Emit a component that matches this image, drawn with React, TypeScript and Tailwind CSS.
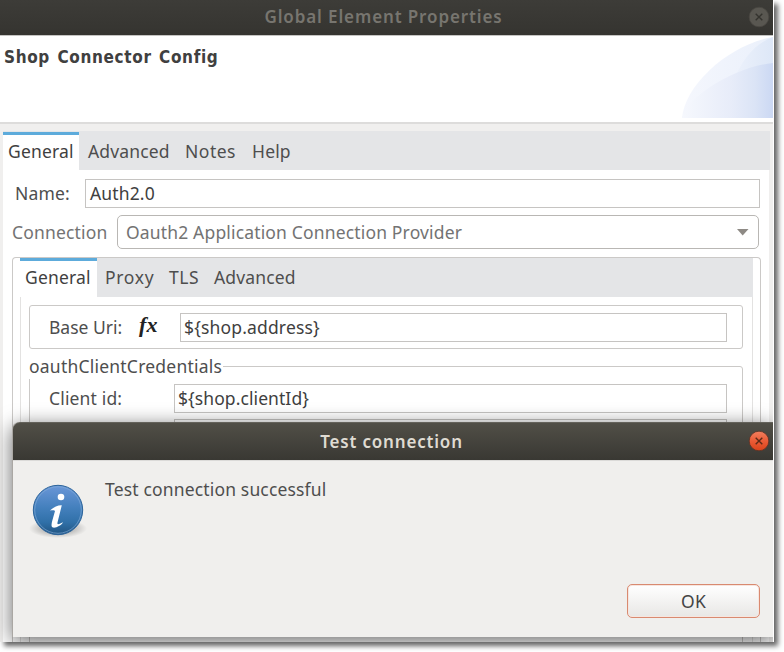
import React from "react";

const ui = "font-['Noto_Sans','Open_Sans',sans-serif] whitespace-nowrap tracking-[0.16px]";

type TabItem = { label: string; className: string };

function TabBar({ items, activeClass }: { items: TabItem[]; activeClass: string }) {
  return (
    <div className="flex h-full w-full bg-[#e4e5e7] text-[17.5px] text-[#4e4e4e]">
      {items.map((t, i) => (
        <div
          key={t.label}
          className={
            i === 0
              ? `h-full shrink-0 border-t-[3px] border-[#5dabdb] bg-white pl-[5px] leading-[33px] text-[#3f3f3f] ${activeClass}`
              : `shrink-0 pt-[3px] leading-[33px] ${t.className}`
          }
        >
          <span className={i === 0 ? t.className : ""}>{t.label}</span>
        </div>
      ))}
    </div>
  );
}

function CloseButton({ active }: { active: boolean }) {
  return (
    <svg width="22" height="22" viewBox="0 0 22 22">
      <defs>
        <linearGradient id="closeFill" x1="0" y1="0" x2="0" y2="1">
          <stop offset="0" stopColor="#f3805f" />
          <stop offset="0.5" stopColor="#ea5b36" />
          <stop offset="1" stopColor="#d9431a" />
        </linearGradient>
      </defs>
      <circle cx="11" cy="11" r="9.8" fill={active ? "url(#closeFill)" : "#595751"} stroke={active ? "#5b3226" : "#4a4842"} strokeWidth="0.8" />
      <path d="M7.7 7.7L14.3 14.3M14.3 7.7L7.7 14.3" stroke={active ? "#5c2a17" : "#34332e"} strokeWidth="1.4" />
    </svg>
  );
}

function Swoosh() {
  return (
    <svg className="block" width="91" height="82" viewBox="0 0 91 82">
      <defs>
        <linearGradient id="outer" x1="0" x2="1">
          <stop offset="0" stopColor="#f5f7fd" />
          <stop offset="1" stopColor="#eaf0fb" />
        </linearGradient>
        <linearGradient id="inner" x1="0" x2="1">
          <stop offset="0" stopColor="#f6f8fd" />
          <stop offset="0.55" stopColor="#e7ecf9" />
          <stop offset="0.8" stopColor="#dbe4f6" />
          <stop offset="1" stopColor="#cbd8f3" />
        </linearGradient>
        <linearGradient id="corner" x1="0" x2="1">
          <stop offset="0" stopColor="#ecf1fb" />
          <stop offset="1" stopColor="#dde7f7" />
        </linearGradient>
      </defs>
      <path d="M0 82C3 48 48 8 91 1V82Z" fill="url(#outer)" />
      <path d="M53 41C62 21 74 7 91 1V30Z" fill="url(#corner)" />
      <path d="M0 82C5 61 52 31 91 27V82Z" fill="url(#inner)" />
    </svg>
  );
}

function InfoIcon() {
  return (
    <svg width="60" height="60" viewBox="0 0 60 60">
      <defs>
        <linearGradient id="ball" x1="0" y1="0" x2="0" y2="1">
          <stop offset="0" stopColor="#6b97d8" />
          <stop offset="0.45" stopColor="#4480bd" />
          <stop offset="0.75" stopColor="#3070a8" />
          <stop offset="1" stopColor="#205380" />
        </linearGradient>
        <radialGradient id="ground">
          <stop offset="0.5" stopColor="#000" stopOpacity="0.22" />
          <stop offset="1" stopColor="#000" stopOpacity="0" />
        </radialGradient>
      </defs>
      <ellipse cx="30" cy="45.5" rx="29" ry="9.5" fill="url(#ground)" />
      <circle cx="30" cy="27" r="24.7" fill="url(#ball)" stroke="#2b639a" strokeWidth="1" />
      <circle cx="30" cy="27" r="23.3" fill="none" stroke="#82acd9" strokeOpacity="0.65" strokeWidth="1" />
      <circle cx="33" cy="14" r="3.3" fill="#fff" />
      <path d="M22 27.5C26 23.5 30 22 33.8 22.2L29.5 39.5C29 42 30.5 41.5 35 39.2C34.5 41.5 28 45.2 25.2 44.6C22.8 44 23.5 41 24.2 38L27 28C26.5 26.8 24.5 27.2 22 27.5Z" fill="#fff" />
    </svg>
  );
}

const field = "border border-[#c6c4c2] bg-white text-[#404040] text-[17.5px]";

export default function App() {
  return (
    <div className={`relative h-[652px] w-[784px] overflow-hidden bg-white ${ui}`}>
      <div className="h-[642px] w-[774px] border-r border-white shadow-[4px_4px_5px_#666]">
        <div className="relative flex h-[642px] w-[773px] flex-col overflow-hidden bg-[#f0efee]">
          {/* Parent window title */}
          <div className="flex h-[35px] shrink-0 items-center justify-end bg-linear-to-b from-[#3d3c38] to-[#353430] pr-[3px]">
            <div className="flex flex-1 justify-center pl-[19px] pb-[2px]">
              <span className="text-[17px] font-semibold tracking-[0.88px] text-[#77756f]">Global Element Properties</span>
            </div>
            <div className="h-[24px] w-[22px]"><CloseButton active={false} /></div>
          </div>
          {/* Banner */}
          <div className="flex h-[87px] shrink-0 justify-between border-t border-[#c5c4c2] bg-white">
            <h1 className="mt-[8px] ml-[4px] font-['DejaVu_Sans_Condensed','DejaVu_Sans',sans-serif] text-[17px] leading-[26px] font-bold tracking-[0.65px] text-[#404040] [font-stretch:condensed] [word-spacing:1.5px]">Shop Connector Config</h1>
            <Swoosh />
          </div>
          <div className="h-[9px] shrink-0 border-t-2 border-[#dddcdb]" />
          {/* Main page */}
          <div className="flex flex-1 flex-col px-[3px] pr-[4px]">
            <div className="-mr-px flex h-[39px] shrink-0 bg-[#e4e5e7] pt-px">
              <TabBar
                activeClass="w-[76px]"
                items={[
                  { label: "General", className: "" },
                  { label: "Advanced", className: "ml-[9px] w-[97px]" },
                  { label: "Notes", className: "w-[67px] tracking-[0.5px]" },
                  { label: "Help", className: "" },
                ]}
              />
            </div>
            <div className="flex flex-1 flex-col bg-white px-[9px] pt-[9px] text-[17.5px] text-[#4e4e4e]">
              <div className="flex h-[29px] shrink-0 items-center">
                <span className="w-[73px] pl-[3px]">Name:</span>
                <div className={`h-[29px] w-[676px] pl-[4px] leading-[27px] ${field}`}>Auth2.0</div>
              </div>
              <div className="mt-[7px] flex h-[34px] shrink-0 items-center text-[#737373]">
                <span className="w-[105px]">Connection</span>
                <div className="flex h-[34px] w-[642px] items-center justify-between rounded-[5px] border border-[#b9b7b4] pr-[9px] pl-[8px]">
                  <span>Oauth2 Application Connection Provider</span>
                  <svg width="13" height="8" viewBox="0 0 13 8"><path d="M1 1H12.5L6.7 7.5Z" fill="#8e8a85" /></svg>
                </div>
              </div>
              {/* Provider panel */}
              <div className="mt-[8px] w-[749px] flex-1 rounded-t-[4px] border border-b-0 border-[#cbc9c7] pr-[7px] pl-[7px]">
                <div className="h-[39px]">
                  <TabBar
                    activeClass="w-[77px]"
                    items={[
                      { label: "General", className: "" },
                      { label: "Proxy", className: "ml-[8px] w-[64px] tracking-[0.7px]" },
                      { label: "TLS", className: "w-[45px] tracking-[0.5px]" },
                      { label: "Advanced", className: "" },
                    ]}
                  />
                </div>
                <div className="h-[380px] border-x border-[#e3e2e1] pt-[8px] pl-[8px]">
                  <div className="flex h-[44px] w-[714px] items-center rounded-[3px] border border-[#cbc9c7] pl-[19px]">
                    <span className="w-[90px] tracking-normal">Base Uri:</span>
                    <span className="w-[41px] pb-[4px] font-['Liberation_Serif',serif] text-[22px] leading-none font-bold text-[#222] italic">fx</span>
                    <div className={`h-[29px] w-[547px] pl-[3px] leading-[27px] ${field}`}>{"${shop.address}"}</div>
                  </div>
                  <fieldset className="mt-[4px] h-[320px] w-[714px] rounded-[3px] border border-[#cbc9c7]">
                    <legend className="-ml-px h-[26px] pr-px leading-[26px] tracking-[0.22px]">oauthClientCredentials</legend>
                    <div className="mt-[5px] flex items-center pl-[19px]">
                      <span className="w-[125px]">Client id:</span>
                      <div className={`h-[29px] w-[553px] pl-[3px] leading-[27px] tracking-[0.08px] ${field}`}>{"${shop.clientId}"}</div>
                    </div>
                    <div className={`mt-[6px] ml-[144px] h-[29px] w-[553px] ${field}`} />
                  </fieldset>
                </div>
              </div>
            </div>
          </div>
          {/* Message dialog over the parent window */}
          <div className="absolute top-[422px] left-[12px] flex h-[215px] w-[761px] flex-col rounded-t-[7px] border-l border-[#aaa7a3] bg-[#f0efed] shadow-[0_4px_20px_rgba(0,0,0,0.6)]">
            <div className="flex h-[38px] shrink-0 items-center rounded-tl-[7px] border-t border-[#64625b] bg-linear-to-b from-[#514f47] to-[#393833] pr-[3px]">
              <div className="flex flex-1 justify-center pl-[22px]">
                <span className="text-[17px] font-semibold tracking-[0.82px] text-[#dfdbd2]">Test connection</span>
              </div>
              <div className="h-[24px] w-[22px]"><CloseButton active /></div>
            </div>
            <div className="flex h-[124px] shrink-0 border-t border-[#dbdad8]">
              <div className="mt-[22px] ml-[15px] w-[77px]"><InfoIcon /></div>
              <p className="mt-[15px] text-[17.5px] leading-[26px] text-[#4e4e4e]">Test connection successful</p>
            </div>
            <button className="mr-[13px] h-[34px] w-[133px] self-end rounded-[5px] border border-[#d98a70] bg-linear-to-b from-white to-[#e8e7e5] text-[17.5px] leading-[32px] text-[#444] shadow-[inset_0_0_0_1px_#f6e6e0]">OK</button>
          </div>
        </div>
      </div>
    </div>
  );
}
